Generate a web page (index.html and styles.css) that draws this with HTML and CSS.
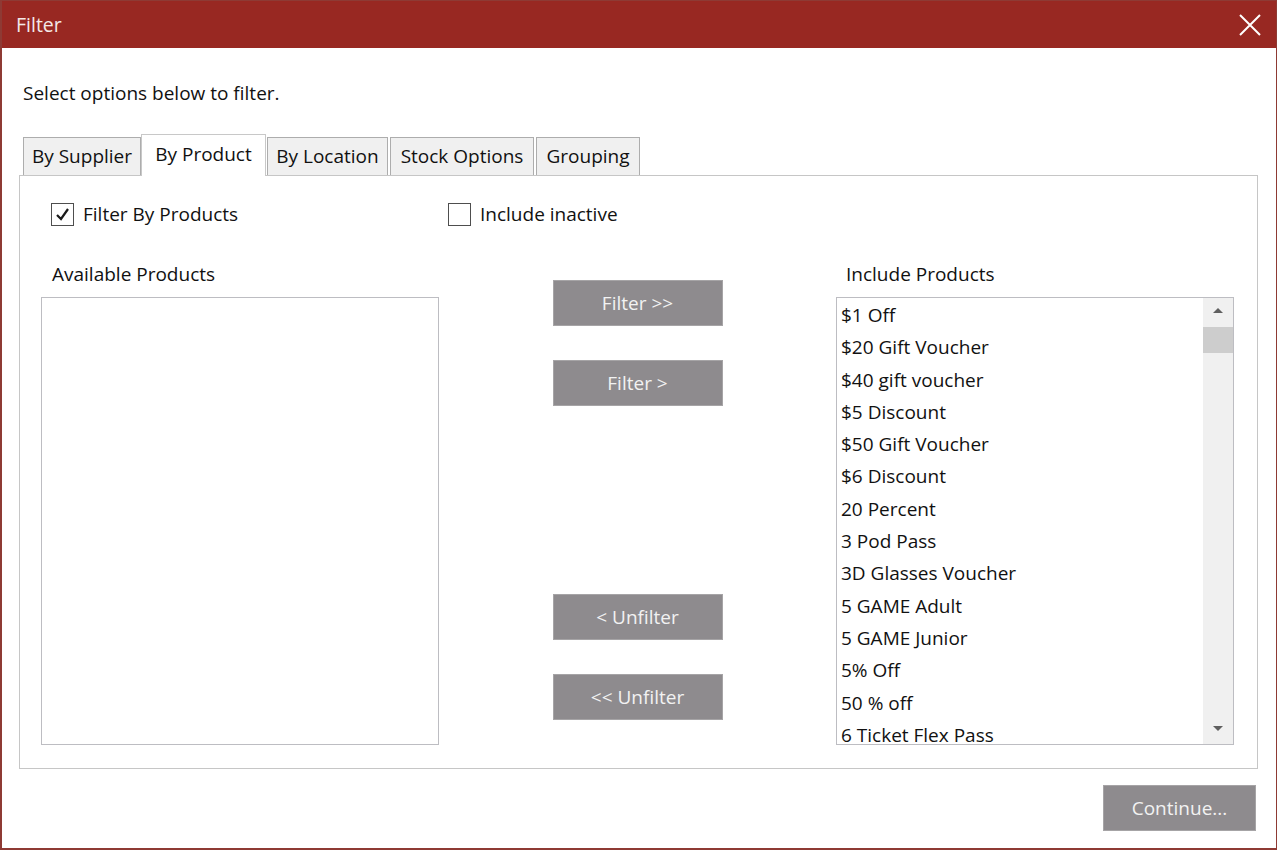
FILE: index.html
```html
<!DOCTYPE html>
<html lang="en">
<head>
    <meta charset="UTF-8">
    <title>Filter</title>
    <link rel="stylesheet" href="styles.css">
</head>
<body>
    <div class="window">
        <div class="titlebar">
            <span class="title">Filter</span>
            <svg class="close" width="22" height="22" viewBox="0 0 22 22">
                <path d="M1 1 L21 21 M21 1 L1 21" stroke="#ffffff" stroke-width="2" fill="none"/>
            </svg>
        </div>

        <div class="content">
            <p class="intro">Select options below to filter.</p>

            <div class="tabs">
                <div class="tab tab-supplier">By Supplier</div>
                <div class="tab tab-product active">By Product</div>
                <div class="tab tab-location">By Location</div>
                <div class="tab tab-stock">Stock Options</div>
                <div class="tab tab-grouping">Grouping</div>
            </div>

            <div class="panel">
                <div class="checks">
                    <label class="check check-first">
                        <span class="box">
                            <svg width="17" height="17" viewBox="0 0 17 17">
                                <path d="M3 9 L7 13 L14 3" stroke="#1a1a1a" stroke-width="2.2" fill="none"/>
                            </svg>
                        </span>
                        Filter By Products
                    </label>
                    <label class="check">
                        <span class="box"></span>
                        Include inactive
                    </label>
                </div>

                <div class="columns">
                    <div class="column">
                        <div class="col-label">Available Products</div>
                        <div class="listbox"></div>
                    </div>

                    <div class="actions">
                        <button class="btn btn-first">Filter &gt;&gt;</button>
                        <button class="btn">Filter &gt;</button>
                        <button class="btn btn-gap">&lt; Unfilter</button>
                        <button class="btn">&lt;&lt; Unfilter</button>
                    </div>

                    <div class="column">
                        <div class="col-label">Include Products</div>
                        <div class="listbox">
                            <ul class="items">
                                <li>$1 Off</li>
                                <li>$20 Gift Voucher</li>
                                <li>$40 gift voucher</li>
                                <li>$5 Discount</li>
                                <li>$50 Gift Voucher</li>
                                <li>$6 Discount</li>
                                <li>20 Percent</li>
                                <li>3 Pod Pass</li>
                                <li>3D Glasses Voucher</li>
                                <li>5 GAME Adult</li>
                                <li>5 GAME Junior</li>
                                <li>5% Off</li>
                                <li>50 % off</li>
                                <li>6 Ticket Flex Pass</li>
                            </ul>
                            <div class="scrollbar">
                                <span class="arrow up"></span>
                                <span class="thumb"></span>
                                <span class="arrow down"></span>
                            </div>
                        </div>
                    </div>
                </div>
            </div>

            <div class="footer">
                <button class="btn btn-continue">Continue...</button>
            </div>
        </div>
    </div>
</body>
</html>
```

FILE: styles.css
```css
* {
    margin: 0;
    padding: 0;
    box-sizing: border-box;
}

body {
    font-family: 'Open Sans', 'Noto Sans', sans-serif;
    font-size: 19px;
    color: #111;
    background: #ffffff;
}

.window {
    width: 1277px;
    height: 850px;
    border: 1px solid #8e3a34;
    border-left-width: 2px;
    border-bottom-width: 2px;
    background: #ffffff;
}

.titlebar {
    height: 47px;
    background: #982822;
    display: flex;
    align-items: center;
    justify-content: space-between;
    padding: 0 15px 0 14px;
}

.title {
    color: #f4e8e7;
    font-size: 19.5px;
}

.close {
    display: block;
    margin-top: 1px;
}

.content {
    padding: 0 18px 0 17px;
}

.intro {
    margin-top: 33px;
    padding-left: 4px;
    line-height: 24px;
}

/* tabs */

.tabs {
    display: flex;
    align-items: flex-end;
    height: 39px;
    margin-top: 31px;
    padding-left: 4px;
    position: relative;
    z-index: 1;
}

.tab {
    height: 38px;
    border: 1px solid #adadad;
    border-bottom: none;
    background: #f0f0f0;
    line-height: 37px;
    text-align: center;
    margin-right: 1px;
    white-space: nowrap;
}

.tab-supplier { width: 118px; margin-right: 0; }
.tab-product { width: 125px; }
.tab-location { width: 121px; margin-right: 2px; }
.tab-stock { width: 144px; margin-right: 2px; }
.tab-grouping { width: 104px; }

.tab.active {
    height: 42px;
    background: #ffffff;
    margin-bottom: -1px;
    border-color: #c8c8c8;
    line-height: 38px;
    padding-bottom: 3px;
}

/* panel */

.panel {
    border: 1px solid #c6c6c6;
    height: 594px;
    padding: 26px 23px 0 21px;
}

.checks {
    display: flex;
    height: 24px;
}

.check {
    display: flex;
    align-items: center;
    gap: 9px;
    line-height: 24px;
}

.check-first {
    width: 407px;
    padding-left: 10px;
}

.box {
    width: 23px;
    height: 23px;
    border: 1px solid #4e4e4e;
    background: #ffffff;
    display: flex;
    align-items: center;
    justify-content: center;
}

.columns {
    display: grid;
    grid-template-columns: 398px 1fr 398px;
    margin-top: 36px;
}

.column {
    display: flex;
    flex-direction: column;
}

.col-label {
    height: 35px;
    line-height: 24px;
    padding-left: 11px;
}

.column:last-child .col-label {
    padding-left: 10px;
}

.listbox {
    height: 448px;
    border: 1px solid #bdbdc2;
    display: flex;
    overflow: hidden;
}

.items {
    list-style: none;
    flex: 1;
    padding: 1px 0 0 4px;
}

.items li {
    height: 32.3px;
    line-height: 32px;
    white-space: nowrap;
}

.scrollbar {
    width: 30px;
    background: #f0f0f0;
    display: flex;
    flex-direction: column;
    align-items: center;
}

.arrow {
    width: 0;
    height: 0;
    border-left: 5px solid transparent;
    border-right: 5px solid transparent;
}

.arrow.up {
    border-bottom: 5px solid #5f5f5f;
    margin-top: 10px;
}

.arrow.down {
    border-top: 5px solid #5f5f5f;
    margin-top: auto;
    margin-bottom: 13px;
}

.thumb {
    width: 30px;
    height: 26px;
    background: #cdcdcd;
    margin-top: 14px;
}

/* buttons */

.actions {
    display: flex;
    flex-direction: column;
    align-items: center;
    padding-top: 18px;
}

.btn {
    width: 170px;
    height: 46px;
    background: #8e8b8e;
    border: 1px solid #a6a4a6;
    color: #f2f2f2;
    font-family: 'Open Sans', 'Noto Sans', sans-serif;
    font-size: 19px;
    margin-bottom: 34px;
}

.actions .btn:last-child {
    margin-bottom: 0;
}

.btn-gap {
    margin-top: 154px;
}

.footer {
    display: flex;
    justify-content: flex-end;
    padding-top: 16px;
    padding-right: 2px;
}

.btn-continue {
    width: 153px;
    margin-bottom: 0;
}
```
